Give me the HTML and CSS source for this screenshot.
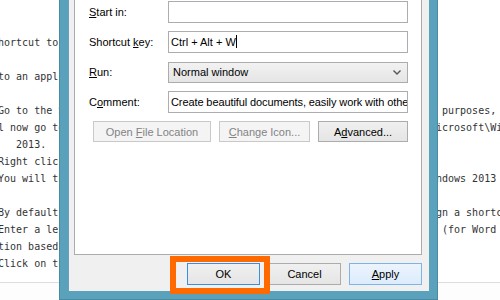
FILE: index.html
```html
<!DOCTYPE html>
<html lang="en">
<head>
  <meta charset="UTF-8">
  <title>Word 2013 Properties</title>
  <link rel="stylesheet" href="styles.css">
</head>
<body>
  <div class="editor">
    <div class="line"><span class="l"></span></div>
    <div class="line"><span class="l"></span></div>
    <div class="line"><span class="l">Shortcut to open Word 2013 quickly</span></div>
    <div class="line"><span class="l"></span></div>
    <div class="line"><span class="l"> to an application in Windows 8</span></div>
    <div class="line"><span class="l"></span></div>
    <div class="line"><span class="l"> Go to the Start screen and search for Microsoft Word 2013. For demonstration</span><span class="r"> purposes,</span></div>
    <div class="line"><span class="l">ll now go to C:\ProgramData\Microsoft\Windows\Start Menu\Programs\M</span><span class="r">icrosoft\Windows</span></div>
    <div class="line"><span class="l">    2013.</span></div>
    <div class="line"><span class="l"> Right click on the Word 2013 shortcut and select Properties.</span></div>
    <div class="line"><span class="l"> You will then see the Properties dialog for the shortcut in Wi</span><span class="r">ndows 2013</span></div>
    <div class="line"><span class="l"></span></div>
    <div class="line"><span class="l"> By default the Shortcut key field reads None. To assi</span><span class="r">gn a shortcut</span></div>
    <div class="line"><span class="l"> Enter a letter in the Shortcut key field, such as W</span><span class="r"> (for Word 2013)</span></div>
    <div class="line"><span class="l">ation based on its name.</span></div>
    <div class="line"><span class="l"> Click on the OK button to save the change.</span></div>
  </div>
  <div class="statusbar"></div>

  <div class="dialog">
    <div class="client">
      <div class="panel">
        <div class="field-row">
          <label><u>T</u>arget:</label>
          <div class="textbox">"C:\Program Files\Microsoft Office\Office15\WINWORD.EXE"</div>
        </div>
        <div class="field-row">
          <label><u>S</u>tart in:</label>
          <div class="textbox"></div>
        </div>
        <div class="field-row">
          <label>Shortcut <u>k</u>ey:</label>
          <div class="textbox">Ctrl + Alt + W<span class="caret"></span></div>
        </div>
        <div class="field-row">
          <label><u>R</u>un:</label>
          <div class="select">
            <span>Normal window</span>
            <svg width="8" height="5" viewBox="0 0 8 5"><path d="M0.5 0.5 L4 4 L7.5 0.5" fill="none" stroke="#555" stroke-width="1.4"/></svg>
          </div>
        </div>
        <div class="field-row">
          <label>C<u>o</u>mment:</label>
          <div class="textbox comment">Create beautiful documents, easily work with others, and enjoy reading.</div>
        </div>
        <div class="action-row">
          <button class="btn disabled w-open">Open <u>F</u>ile Location</button>
          <button class="btn disabled w-icon"><u>C</u>hange Icon...</button>
          <button class="btn w-adv">A<u>d</u>vanced...</button>
        </div>
      </div>
      <div class="footer">
        <button class="btn default">OK</button>
        <button class="btn">Cancel</button>
        <button class="btn apply"><u>A</u>pply</button>
      </div>
    </div>
  </div>

  <div class="highlight"></div>
</body>
</html>
```

FILE: styles.css
```css
* {
  margin: 0;
  padding: 0;
  box-sizing: border-box;
}

body {
  width: 500px;
  height: 300px;
  overflow: hidden;
  background-color: #fff;
  position: relative;
  display: flex;
  flex-direction: column;
}

/* background text editor */
.editor {
  height: 282px;
  margin-left: -8px;
  font-family: 'DejaVu Sans Mono', monospace;
  font-size: 10px;
  color: #333;
}

.line {
  display: flex;
  height: 17px;
  line-height: 17px;
  white-space: pre;
}

.line .l {
  width: 444px;
  flex-shrink: 0;
  overflow: hidden;
}

.statusbar {
  flex: 1;
  border-top: 1px solid #dedede;
  background-color: #fdfdfd;
}

/* properties dialog */
.dialog {
  position: absolute;
  left: 60px;
  top: -60px;
  width: 377px;
  height: 359px;
  border: 8px solid #5aa2bc;
  box-shadow: 0 0 0 1px #4a8aa2;
  font-family: 'Liberation Sans', Arial, sans-serif;
  font-size: 11px;
  color: #000;
}

.client {
  height: 100%;
  background-color: #f0f0f0;
  box-shadow: inset 1px 0 0 #6d9fb3;
  padding: 6px 7px 0 6px;
  display: flex;
  flex-direction: column;
}

.panel {
  flex: 1;
  background-color: #fff;
  border: 1px solid #acacac;
  padding: 16px 13px 0 14px;
  display: flex;
  flex-direction: column;
  gap: 8px;
}

.field-row {
  display: grid;
  grid-template-columns: 79px 240px;
  align-items: center;
  height: 22px;
}

.field-row label {
  white-space: nowrap;
}

.textbox {
  height: 22px;
  border: 1px solid #abadb3;
  background-color: #fff;
  padding: 0 2px;
  line-height: 20px;
  white-space: nowrap;
  overflow: hidden;
}

.textbox.comment {
  letter-spacing: -0.1px;
}

.caret {
  display: inline-block;
  width: 1px;
  height: 13px;
  background-color: #000;
  vertical-align: -2px;
}

.select {
  height: 21px;
  border: 1px solid #acacac;
  background: linear-gradient(#f2f2f2, #e5e5e5);
  padding: 0 6px 0 4px;
  display: flex;
  align-items: center;
  justify-content: space-between;
}

.action-row {
  display: flex;
  gap: 8px;
  margin-left: 4px;
}

.btn {
  height: 21px;
  font-family: 'Liberation Sans', Arial, sans-serif;
  font-size: 11px;
  color: #000;
  border: 1px solid #acacac;
  background: linear-gradient(#f0f0f0, #e5e5e5);
  white-space: nowrap;
}

.btn.disabled {
  color: #838383;
  border-color: #c9c9c9;
  background: #f4f4f4;
}

.w-open { width: 118px; }
.w-icon { width: 91px; }
.w-adv { width: 90px; }

.footer {
  display: flex;
  justify-content: flex-end;
  gap: 8px;
  padding: 8px 0 6px;
}

.footer .btn {
  width: 73px;
  height: 22px;
}

.btn.default {
  border-color: #3c8ee0;
}

.btn.apply {
  border-color: #7eb4ea;
  background: linear-gradient(#ecf4fc, #dcecfc);
}

/* orange annotation around OK */
.highlight {
  position: absolute;
  left: 170px;
  top: 256px;
  width: 100px;
  height: 38px;
  border: 6px solid #ff6a00;
}
```
